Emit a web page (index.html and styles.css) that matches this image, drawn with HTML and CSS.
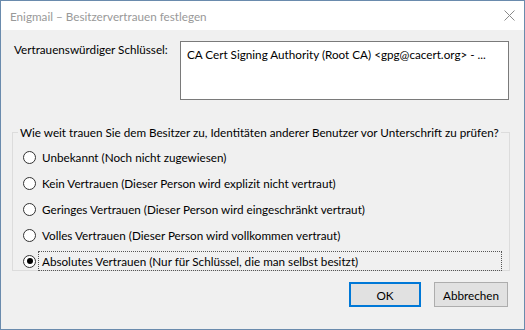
FILE: index.html
```html
<!DOCTYPE html>
<html lang="de">
<head>
<meta charset="utf-8">
<title>Enigmail – Besitzervertrauen festlegen</title>
<link rel="stylesheet" href="styles.css">
</head>
<body>
<div class="window">
  <div class="titlebar">
    <span class="title">Enigmail – Besitzervertrauen festlegen</span>
    <svg class="close" width="11" height="11" viewBox="0 0 11 11"><path d="M0.5 0.5 L10.5 10.5 M10.5 0.5 L0.5 10.5" stroke="#8a8a8a" stroke-width="1" fill="none"/></svg>
  </div>
  <div class="content">
    <div class="keyrow">
      <span class="keylabel">Vertrauenswürdiger Schlüssel:</span>
      <div class="keybox">CA Cert Signing Authority (Root CA) &lt;gpg@cacert.org&gt; - ...</div>
    </div>
    <fieldset class="group">
      <legend>Wie weit trauen Sie dem Besitzer zu, Identitäten anderer Benutzer vor Unterschrift zu prüfen?</legend>
      <div class="radios">
        <div class="row"><span class="radio"></span><span class="label">Unbekannt (Noch nicht zugewiesen)</span></div>
        <div class="row"><span class="radio"></span><span class="label">Kein Vertrauen (Dieser Person wird explizit nicht vertraut)</span></div>
        <div class="row"><span class="radio"></span><span class="label">Geringes Vertrauen (Dieser Person wird eingeschränkt vertraut)</span></div>
        <div class="row"><span class="radio"></span><span class="label">Volles Vertrauen (Dieser Person wird vollkommen vertraut)</span></div>
        <div class="row"><span class="radio checked"></span><span class="label focus">Absolutes Vertrauen (Nur für Schlüssel, die man selbst besitzt)</span></div>
      </div>
    </fieldset>
    <div class="buttons">
      <button class="btn default">OK</button>
      <button class="btn">Abbrechen</button>
    </div>
  </div>
</div>
</body>
</html>
```

FILE: styles.css
```css
html, body {
  margin: 0;
  padding: 0;
}
body {
  font-family: "Lato", "Noto Sans", sans-serif;
  font-size: 11.7px;
  color: #000;
  background: #f0f0f0;
}
.window {
  width: 525px;
  height: 330px;
  box-sizing: border-box;
  border: 1px solid #6a8bad;
  background: #f0f0f0;
  display: flex;
  flex-direction: column;
}
.titlebar {
  height: 29px;
  background: #fff;
  display: flex;
  align-items: center;
  justify-content: space-between;
  padding: 0 9px 0 9px;
}
.title {
  color: #999;
  font-size: 11.7px;
  white-space: nowrap;
}
.close {
  margin-top: -1px;
}
.content {
  flex: 1;
  display: flex;
  flex-direction: column;
  padding: 11px 14px 0 11px;
}
.keyrow {
  display: flex;
  align-items: flex-start;
}
.keylabel {
  width: 166px;
  padding: 0 0 0 2px;
  line-height: 16px;
  white-space: nowrap;
}
.keybox {
  width: 329px;
  height: 59px;
  box-sizing: border-box;
  border: 1px solid #7a7a7a;
  background: #fff;
  padding: 4px 6px;
  line-height: 16px;
  white-space: nowrap;
}
.group {
  margin: 24px 0 0 0;
  padding: 0 7px 5px 10px;
  border: 1px solid #dcdcdc;
  height: 147px;
  box-sizing: border-box;
  min-width: 0;
}
.group legend {
  padding: 0 2px;
  margin-left: -5px;
  line-height: 16px;
  font-size: 11.7px;
  white-space: nowrap;
}
.radios {
  display: flex;
  flex-direction: column;
  padding-top: 4px;
}
.row {
  height: 26px;
  display: flex;
  align-items: center;
}
.radio {
  width: 13px;
  height: 13px;
  box-sizing: border-box;
  border: 1px solid #333;
  border-radius: 50%;
  background: #fff;
  margin-right: 2px;
  display: flex;
  align-items: center;
  justify-content: center;
  flex: none;
}
.radio.checked::after {
  content: "";
  width: 6px;
  height: 6px;
  border-radius: 50%;
  background: #000;
}
.label {
  padding: 1px 3px;
  border: 1px dotted transparent;
  line-height: 16px;
  flex: 1;
  white-space: nowrap;
}
.label.focus {
  border-color: #555;
}
.buttons {
  display: flex;
  justify-content: flex-end;
  gap: 13px;
  margin: 11px 2px 0 0;
}
.btn {
  font-family: inherit;
  font-size: 11.7px;
  height: 25px;
  background: #e1e1e1;
  border: 1px solid #adadad;
  padding: 0;
  width: 74px;
  color: #000;
}
.btn.default {
  border: 2px solid #0078d7;
  width: 72px;
}
```
